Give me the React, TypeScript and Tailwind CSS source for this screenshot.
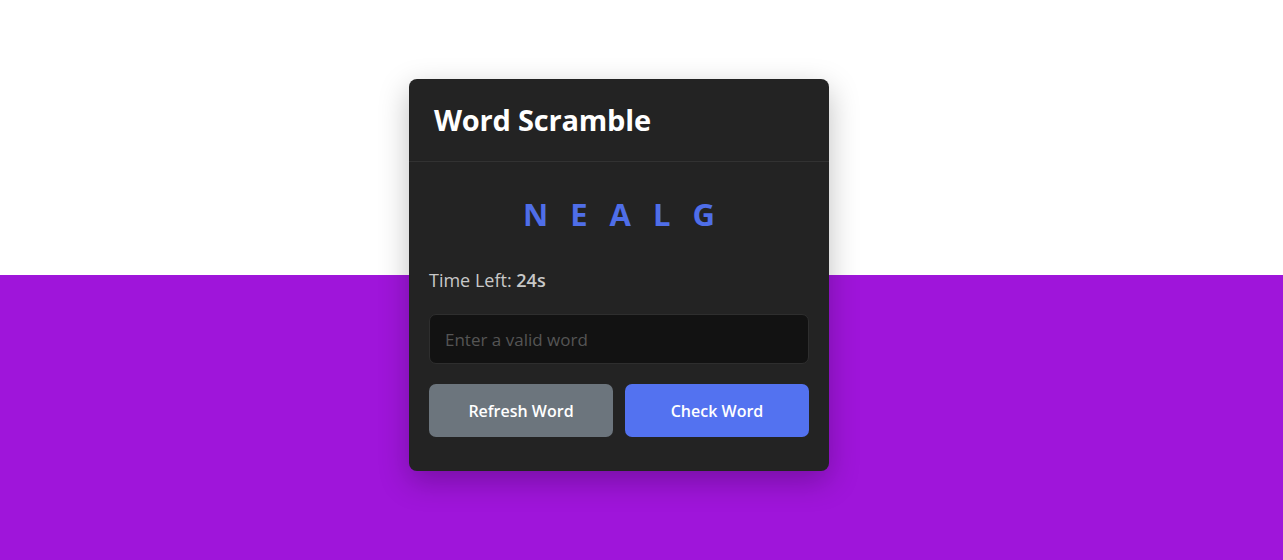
export default function App() {
  return (
    <div
      className="min-h-screen w-full bg-[linear-gradient(to_bottom,#ffffff_275px,#9f15da_275px)] flex justify-center pt-[79px] pr-[45px]"
      style={{ fontFamily: '"Open Sans", "Liberation Sans", sans-serif' }}
    >
      {/* Card */}
      <div className="w-[420px] h-[392px] bg-[#232323] rounded-[8px] shadow-[0_10px_30px_rgba(0,0,0,0.25)]">
        <div className="h-[83px] border-b border-[#323232] flex items-center px-[25px]">
          <h1 className="text-[29px] font-bold text-white tracking-[-0.2px]">Word Scramble</h1>
        </div>

        <div className="px-[20px] pt-[29px]">
          <p className="text-center text-[31px] font-bold text-[#4f6ee8] tracking-[22px] pl-[22px] leading-[46px]">
            NEALG
          </p>

          <p className="mt-[30px] text-[18px] text-[#c8c8c8] leading-[26px]">
            Time Left: <span className="font-semibold">24s</span>
          </p>

          <input
            type="text"
            placeholder="Enter a valid word"
            className="mt-[21px] w-full h-[50px] bg-[#121212] border border-[#2e2e2e] rounded-[7px] px-[15px] text-[17px] text-white placeholder:text-[#555555] outline-none"
          />

          <div className="mt-[20px] flex gap-[12px]">
            <button className="flex-1 h-[53px] rounded-[7px] bg-[#6c757d] text-white text-[16px] font-semibold">
              Refresh Word
            </button>
            <button className="flex-1 h-[53px] rounded-[7px] bg-[#5372f0] text-white text-[16px] font-semibold">
              Check Word
            </button>
          </div>
        </div>
      </div>
    </div>
  );
}
